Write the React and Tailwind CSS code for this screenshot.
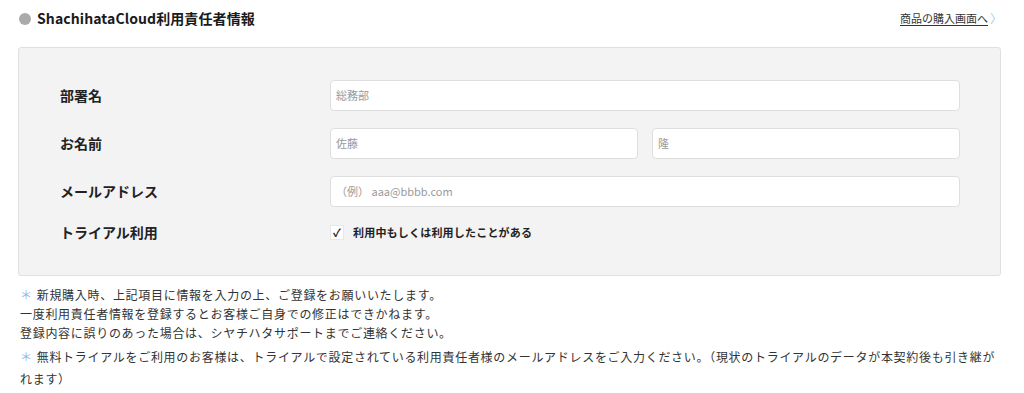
import React from "react";

const font = { fontFamily: '"Noto Sans CJK JP", "Noto Sans", sans-serif' };

function Input({ placeholder, className = "" }) {
  return (
    <div
      className={`h-[31px] rounded-[4px] border border-[#dedede] bg-white flex items-center pl-[5px] text-[11px] text-[#9a9a9a] ${className}`}
    >
      {placeholder}
    </div>
  );
}

function Row({ label, children, h = "h-[31px]" }) {
  return (
    <div className={`flex items-center ${h}`}>
      <div className="w-[270px] shrink-0 text-[14px] font-bold text-[#222]">{label}</div>
      <div className="flex-1 flex items-center">{children}</div>
    </div>
  );
}

export default function App() {
  return (
    <div className="w-[1024px] h-[393px] bg-white overflow-hidden text-[#333]" style={font}>
      <div className="flex items-center justify-between pl-[19px] pr-[22px] h-[37px]">
        <div className="flex items-center">
          <span className="w-[12px] h-[12px] rounded-full bg-[#aaaaaa] mr-[6px]" />
          <span className="text-[14px] font-bold text-[#1a1a1a] tracking-[0.1px]">ShachihataCloud利用責任者情報</span>
        </div>
        <div className="flex items-center text-[11px] text-[#333]">
          <span className="underline underline-offset-[2px]">商品の購入画面へ</span>
          <span className="text-[#a9cbea] text-[12px] ml-[2px] leading-none">〉</span>
        </div>
      </div>

      <div className="mx-[18px] mt-[10px] w-[983px] h-[229px] bg-[#f3f3f3] border border-[#e0e0e0] rounded-[3px] pl-[41px] pr-[40px] pt-[32px]">
        <div className="flex flex-col gap-[17px]">
          <Row label="部署名">
            <Input placeholder="総務部" className="flex-1" />
          </Row>
          <Row label="お名前">
            <div className="flex-1 flex gap-[14px]">
              <Input placeholder="佐藤" className="flex-1" />
              <Input placeholder="隆" className="flex-1" />
            </div>
          </Row>
          <Row label="メールアドレス">
            <Input placeholder="（例） aaa@bbbb.com" className="flex-1" />
          </Row>
          <div className="-mt-[1px]">
            <Row label="トライアル利用" h="h-[18px]">
              <div className="flex items-center">
                <span className="w-[14px] h-[15px] bg-white border border-[#e8e8e8] flex items-center justify-center text-[11px] font-bold text-[#222] leading-none">✓</span>
                <span className="ml-[9px] text-[11px] font-bold text-[#222] tracking-[0.2px]">利用中もしくは利用したことがある</span>
              </div>
            </Row>
          </div>
        </div>
      </div>

      <div className="pl-[20px] pr-[18px] mt-[9px] text-[12px] tracking-[0.7px] text-[#333]">
        <div className="leading-[19px]">
          <p><span className="text-[#8fb8dc] mr-[4px]">＊</span>新規購入時、上記項目に情報を入力の上、ご登録をお願いいたします。</p>
          <p>一度利用責任者情報を登録するとお客様ご自身での修正はできかねます。</p>
          <p>登録内容に誤りのあった場合は、シヤチハタサポートまでご連絡ください。</p>
        </div>
        <p className="leading-[22px] mt-[4px]">
          <span className="text-[#8fb8dc] mr-[4px]">＊</span>無料トライアルをご利用のお客様は、トライアルで設定されている利用責任者様のメールアドレスをご入力ください。（現状のトライアルのデータが本契約後も引き継がれます）
        </p>
      </div>
    </div>
  );
}
